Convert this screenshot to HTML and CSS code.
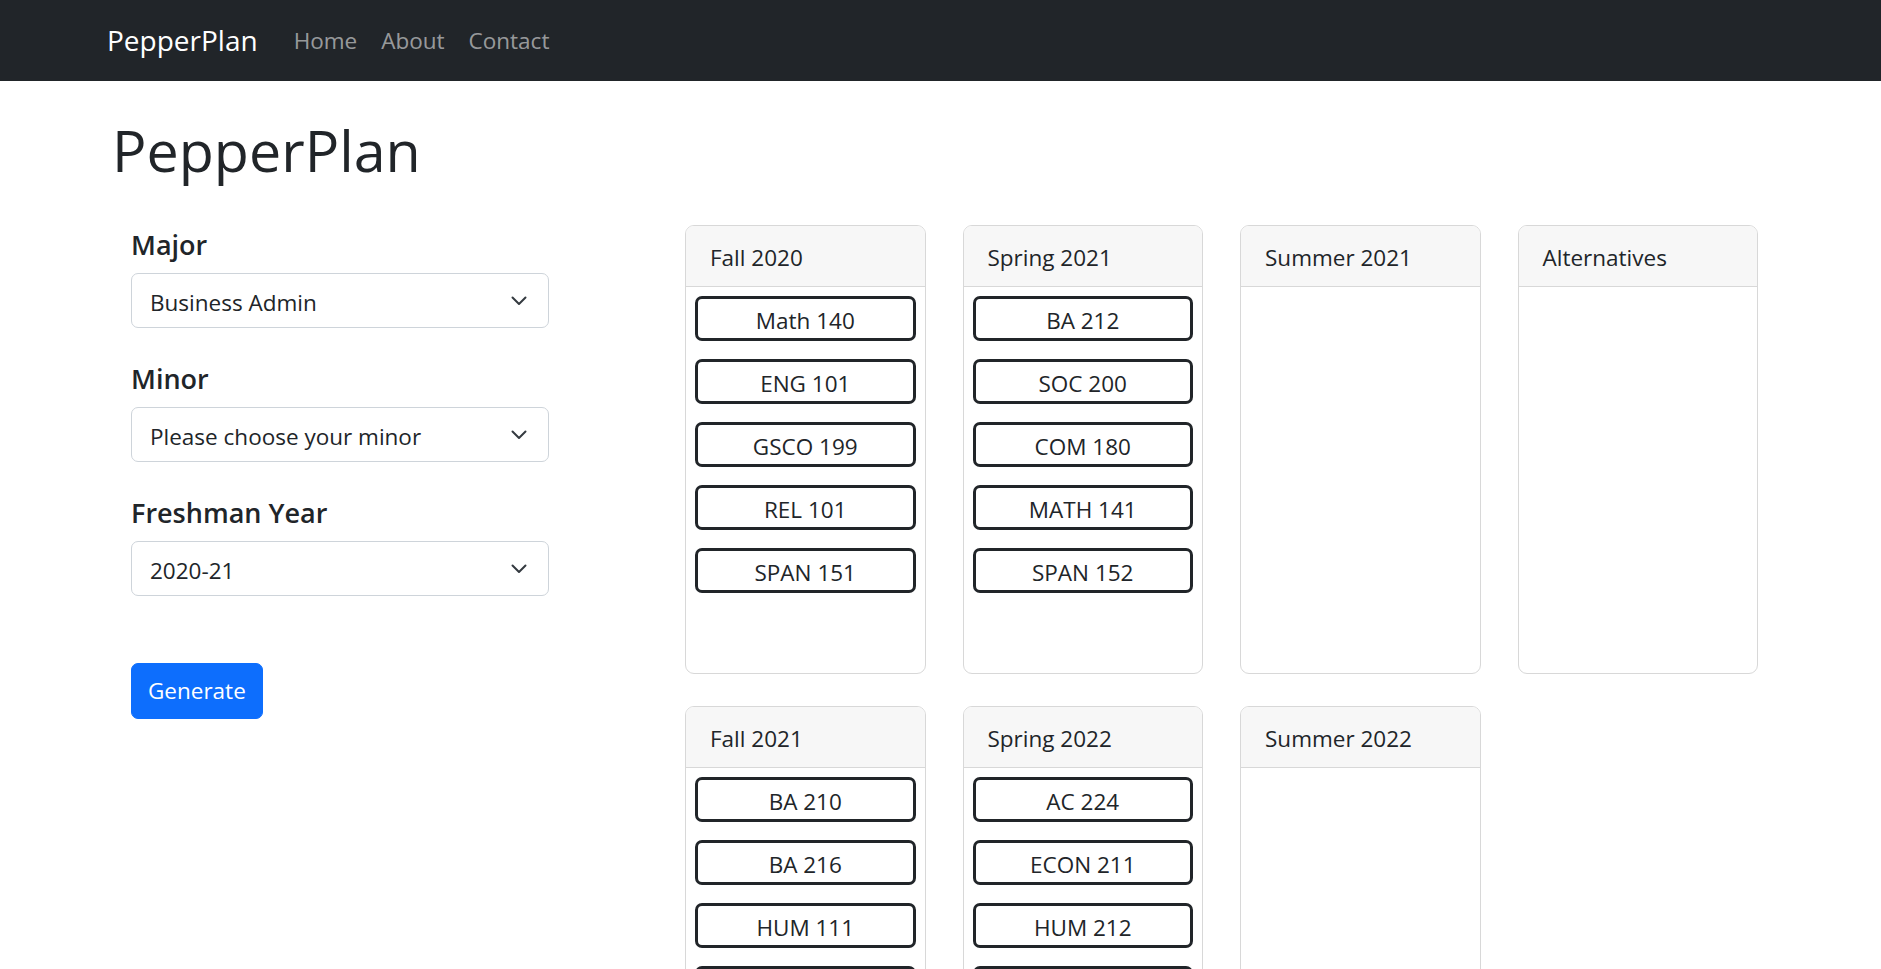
FILE: index.html
```html
<!DOCTYPE html>
<html lang="en">
<head>
<meta charset="utf-8">
<title>PepperPlan</title>
<link rel="stylesheet" href="styles.css">
</head>
<body>
<nav class="navbar">
  <div class="nav-inner">
    <a class="brand" href="#">PepperPlan</a>
    <a class="nav-link" href="#">Home</a>
    <a class="nav-link" href="#">About</a>
    <a class="nav-link" href="#">Contact</a>
  </div>
</nav>
<main class="page">
  <h1 class="title">PepperPlan</h1>
  <div class="layout">
    <form class="form-col">
      <label class="field-label">Major</label>
      <div class="select"><span>Business Admin</span><svg class="chev" width="16" height="10" viewBox="0 0 16 10"><polyline points="1.5,1.5 8,8 14.5,1.5" fill="none" stroke="#343a40" stroke-width="2" stroke-linecap="round" stroke-linejoin="round"/></svg></div>
      <label class="field-label">Minor</label>
      <div class="select"><span>Please choose your minor</span><svg class="chev" width="16" height="10" viewBox="0 0 16 10"><polyline points="1.5,1.5 8,8 14.5,1.5" fill="none" stroke="#343a40" stroke-width="2" stroke-linecap="round" stroke-linejoin="round"/></svg></div>
      <label class="field-label">Freshman Year</label>
      <div class="select"><span>2020-21</span><svg class="chev" width="16" height="10" viewBox="0 0 16 10"><polyline points="1.5,1.5 8,8 14.5,1.5" fill="none" stroke="#343a40" stroke-width="2" stroke-linecap="round" stroke-linejoin="round"/></svg></div>
      <button type="button" class="btn">Generate</button>
    </form>
    <section class="plan">
      <div class="card">
        <div class="card-header">Fall 2020</div>
        <div class="card-body">
          <div class="course">Math 140</div>
          <div class="course">ENG 101</div>
          <div class="course">GSCO 199</div>
          <div class="course">REL 101</div>
          <div class="course">SPAN 151</div>
        </div>
      </div>
      <div class="card">
        <div class="card-header">Spring 2021</div>
        <div class="card-body">
          <div class="course">BA 212</div>
          <div class="course">SOC 200</div>
          <div class="course">COM 180</div>
          <div class="course">MATH 141</div>
          <div class="course">SPAN 152</div>
        </div>
      </div>
      <div class="card">
        <div class="card-header">Summer 2021</div>
        <div class="card-body"></div>
      </div>
      <div class="card">
        <div class="card-header">Alternatives</div>
        <div class="card-body"></div>
      </div>
      <div class="card">
        <div class="card-header">Fall 2021</div>
        <div class="card-body">
          <div class="course">BA 210</div>
          <div class="course">BA 216</div>
          <div class="course">HUM 111</div>
          <div class="course"></div>
        </div>
      </div>
      <div class="card">
        <div class="card-header">Spring 2022</div>
        <div class="card-body">
          <div class="course">AC 224</div>
          <div class="course">ECON 211</div>
          <div class="course">HUM 212</div>
          <div class="course"></div>
        </div>
      </div>
      <div class="card">
        <div class="card-header">Summer 2022</div>
        <div class="card-body"></div>
      </div>
    </section>
  </div>
</main>
</body>
</html>
```

FILE: styles.css
```css
* {
  box-sizing: border-box;
}

html, body {
  margin: 0;
  padding: 0;
}

body {
  font-family: "Open Sans", "Noto Sans", sans-serif;
  font-size: 22.5px;
  color: #212529;
  background: #fff;
}

.navbar {
  height: 81px;
  background: #212529;
}

.nav-inner {
  height: 100%;
  display: flex;
  align-items: center;
  padding-left: 107px;
}

.brand {
  font-size: 28px;
  line-height: 45px;
  color: #fff;
  text-decoration: none;
  margin-right: 24px;
}

.nav-link {
  font-size: 22.5px;
  line-height: 36px;
  padding: 0 12px;
  color: rgba(255, 255, 255, 0.55);
  text-decoration: none;
}

.page {
  padding-left: 112px;
}

.title {
  margin: 35px 0 41px;
  font-size: 57.4px;
  line-height: 68px;
  font-weight: 500;
}

.layout {
  display: flex;
  align-items: flex-start;
}

.form-col {
  width: 418px;
  margin: 0 0 0 19px;
  padding-top: 1px;
  display: flex;
  flex-direction: column;
  align-items: flex-start;
}

.field-label {
  display: block;
  font-size: 27px;
  font-weight: 600;
  line-height: 35px;
  padding-top: 1px;
  margin-bottom: 11px;
}

.select {
  width: 100%;
  height: 55px;
  border: 1px solid #ced4da;
  border-radius: 7px;
  padding: 3px 21px 0 18px;
  display: flex;
  align-items: center;
  justify-content: space-between;
  font-size: 22.5px;
  margin-bottom: 32px;
}

.chev {
  display: block;
  margin-top: -2px;
}

.btn {
  margin-top: 35px;
  height: 56px;
  padding: 0 16px;
  border: 1px solid #0d6efd;
  background: #0d6efd;
  color: #fff;
  font-family: inherit;
  font-size: 22.5px;
  line-height: 54px;
  border-radius: 7px;
}

.plan {
  margin-left: 136px;
  display: grid;
  grid-template-columns: repeat(4, 240.5px);
  column-gap: 37px;
  row-gap: 31.5px;
}

.card {
  height: 449px;
  border: 1px solid #d8d8d8;
  border-radius: 9px;
  overflow: hidden;
  display: flex;
  flex-direction: column;
}

.card-header {
  background: #f7f7f7;
  border-bottom: 1px solid #d8d8d8;
  padding: 14px 24px 10px;
  line-height: 36px;
  font-size: 22.5px;
}

.card-body {
  padding: 9px 9px 0;
  display: flex;
  flex-direction: column;
  gap: 18px;
}

.course {
  height: 45px;
  border: 3px solid #212529;
  border-radius: 7px;
  text-align: center;
  font-size: 22.5px;
  line-height: 34px;
  padding-top: 5px;
}
```
